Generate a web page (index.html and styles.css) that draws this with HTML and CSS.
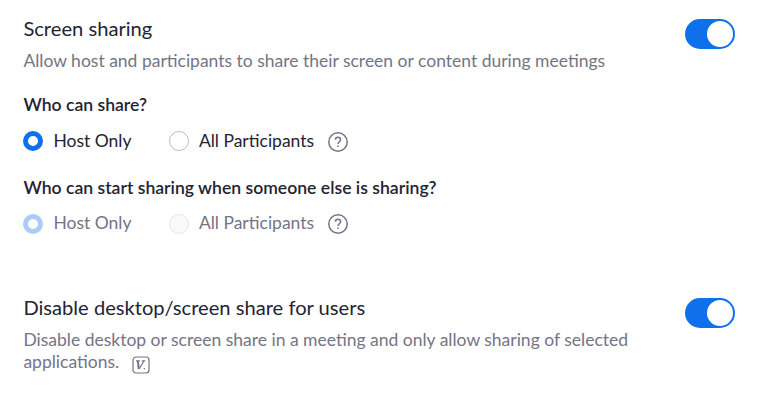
FILE: index.html
```html
<!DOCTYPE html>
<html lang="en">

<head>
    <meta charset="UTF-8">
    <meta name="viewport" content="width=device-width, initial-scale=1.0">
    <title>Meeting Settings</title>
    <link rel="stylesheet" href="styles.css">
</head>

<body>
    <section class="setting">
        <div class="setting-text">
            <h2>Screen sharing</h2>
            <p class="description">Allow host and participants to share their screen or content during meetings</p>

            <h3>Who can share?</h3>
            <div class="options">
                <label class="first"><input type="radio" name="share" checked><span>Host Only</span></label>
                <label><input type="radio" name="share"><span>All Participants</span></label>
                <svg class="help" viewBox="0 0 20 20">
                    <circle cx="10" cy="10" r="9.2" />
                    <path d="M7.4 7.8C7.4 6.2 8.5 5.3 10 5.3s2.6 1 2.6 2.4c0 1.9-2.6 2.2-2.6 4.4" />
                    <path d="M10 13.4v1.5" />
                </svg>
            </div>

            <h3>Who can start sharing when someone else is sharing?</h3>
            <div class="options disabled">
                <label class="first"><input type="radio" name="start" checked disabled><span>Host Only</span></label>
                <label><input type="radio" name="start" disabled><span>All Participants</span></label>
                <svg class="help" viewBox="0 0 20 20">
                    <circle cx="10" cy="10" r="9.2" />
                    <path d="M7.4 7.8C7.4 6.2 8.5 5.3 10 5.3s2.6 1 2.6 2.4c0 1.9-2.6 2.2-2.6 4.4" />
                    <path d="M10 13.4v1.5" />
                </svg>
            </div>
        </div>
        <button class="toggle" aria-label="Screen sharing"></button>
    </section>

    <section class="setting">
        <div class="setting-text">
            <h2>Disable desktop/screen share for users</h2>
            <p class="description">Disable desktop or screen share in a meeting and only allow sharing of selected applications.
                <svg class="modified" viewBox="0 0 18 18">
                    <rect x="1" y="1" width="16" height="16" rx="3" />
                    <path d="M4 4.8h4M9.8 4.8h3.4" />
                    <path class="thick" d="M5.8 5l1 8" />
                    <path d="M7 13l5-8M11.7 12.6h1.3" />
                </svg>
            </p>
        </div>
        <button class="toggle" aria-label="Disable desktop sharing"></button>
    </section>
</body>

</html>
```

FILE: styles.css
```css
body {
    margin: 0;
    padding: 15px 40px 0 23.4px;
    font-family: Lato, sans-serif;
    background-color: #fff;
    color: #232333;
}

.setting {
    display: flex;
    justify-content: space-between;
    align-items: flex-start;
}

.setting:first-child {
    height: 279px;
}

.setting-text {
    width: 625px;
}

h2 {
    margin: 0;
    font-size: 20.15px;
    font-weight: 400;
    line-height: 27px;
}

.description {
    margin: 8px 0 0;
    font-size: 17.5px;
    line-height: 22px;
    color: #747487;
}

h3 {
    margin: 22px 0 0;
    font-size: 17.6px;
    font-weight: 600;
    line-height: 22px;
}

.options {
    display: flex;
    align-items: center;
    height: 22px;
    margin-top: 14px;
    font-size: 17.5px;
}

.options + h3 {
    margin-top: 25px;
}

label {
    display: flex;
    align-items: center;
}

label span {
    padding-bottom: 2px;
}

.disabled label span {
    padding-bottom: 3px;
}

.first {
    width: 145.5px;
}

input {
    appearance: none;
    box-sizing: border-box;
    width: 20px;
    height: 20px;
    margin: 0 10px 0 0;
    border: 1px solid #babacc;
    border-radius: 50%;
    background-color: #fff;
}

input:checked {
    border: 5px solid #0e71eb;
}

.disabled {
    color: #747487;
}

.disabled input {
    border-color: #e4e4ed;
    background-color: #f9f9fc;
}

.disabled input:checked {
    border-color: #aacdf8;
    background-color: #fff;
}

.help {
    width: 20px;
    height: 20px;
    margin: 2px 0 0 14px;
}

.disabled .help {
    margin-top: 0;
}

.help,
.modified {
    fill: none;
    stroke: #747487;
    stroke-width: 1.5;
}

.modified {
    width: 18px;
    height: 18px;
    margin-left: 8px;
    vertical-align: -6px;
    stroke-width: 1.2;
}

.thick {
    stroke-width: 2;
}

.toggle {
    display: flex;
    justify-content: flex-end;
    width: 50px;
    height: 30px;
    margin-top: 4px;
    padding: 2px;
    border: 0;
    border-radius: 15px;
    background-color: #0e71eb;
}

.toggle::after {
    content: "";
    width: 26px;
    height: 26px;
    border-radius: 50%;
    background-color: #fff;
}
```
